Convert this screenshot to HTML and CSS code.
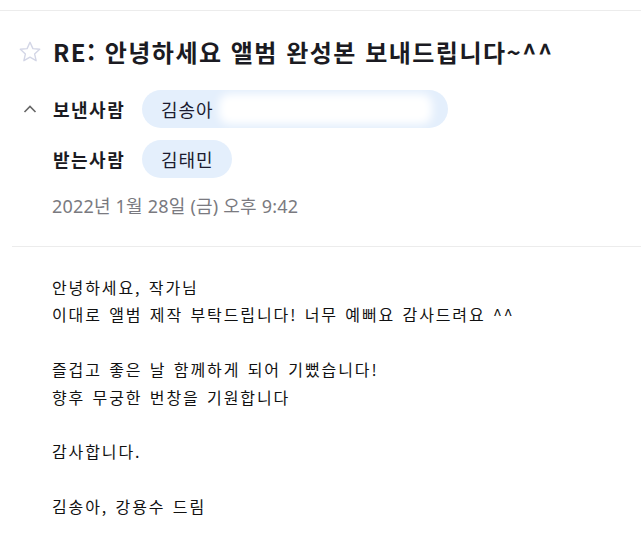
FILE: index.html
```html
<!DOCTYPE html>
<html lang="ko">
<head>
<meta charset="utf-8">
<title>메일</title>
<link rel="stylesheet" href="styles.css">
</head>
<body>
<div class="topbar"></div>
<header class="mail-head">
  <div class="title-row">
    <svg class="star" width="24" height="24" viewBox="0 0 24 24" aria-hidden="true">
      <path d="M12 2.3l2.9 6.3 6.8.7-5.1 4.6 1.5 6.8L12 17.2l-6.1 3.5 1.5-6.8-5.1-4.6 6.8-.7z" fill="none" stroke="#d3d6e6" stroke-width="1.4" stroke-linejoin="round"/>
    </svg>
    <h1 class="subject">RE: 안녕하세요 앨범 완성본 보내드립니다~^^</h1>
  </div>
  <div class="meta-row">
    <span class="toggle">
      <svg width="14" height="10" viewBox="0 0 14 10" aria-hidden="true"><path d="M1.5 8L7 2.5 12.5 8" fill="none" stroke="#666" stroke-width="1.6"/></svg>
    </span>
    <span class="label">보낸사람</span>
    <span class="chip chip-wide">김송아<span class="blurred"></span></span>
  </div>
  <div class="meta-row">
    <span class="toggle"></span>
    <span class="label">받는사람</span>
    <span class="chip">김태민</span>
  </div>
  <div class="date">2022년 1월 28일 (금) 오후 9:42</div>
</header>
<div class="divider"></div>
<main class="mail-body">
  <p>안녕하세요, 작가님<br>이대로 앨범 제작 부탁드립니다! 너무 예뻐요 감사드려요 ^^</p>
  <p>즐겁고 좋은 날 함께하게 되어 기뻤습니다!<br>향후 무궁한 번창을 기원합니다</p>
  <p>감사합니다.</p>
  <p>김송아, 강용수 드림</p>
</main>
</body>
</html>
```
FILE: styles.css
```css
html, body {
  margin: 0;
  padding: 0;
  background: #fff;
}
body {
  font-family: "Noto Sans CJK KR", "Noto Sans", sans-serif;
  color: #1b1b22;
  width: 641px;
  height: 558px;
  overflow: hidden;
}
.topbar {
  height: 10px;
  border-bottom: 1px solid #ececec;
}
.mail-head {
  padding: 0 0 0 18px;
}
.title-row {
  display: flex;
  align-items: center;
  height: 36px;
  margin-top: 23px;
}
.star {
  flex: none;
  margin-right: 11px;
}
.subject {
  margin: 0;
  font-size: 24px;
  font-weight: 700;
  line-height: 36px;
  color: #1b1b22;
  letter-spacing: 1.5px;
}
.meta-row {
  display: flex;
  align-items: center;
  height: 38px;
  margin-top: 12px;
}
.title-row + .meta-row {
  margin-top: 20px;
}
.toggle {
  width: 35px;
  flex: none;
  display: flex;
  align-items: center;
  padding-left: 5px;
  box-sizing: border-box;
}
.label {
  width: 89px;
  flex: none;
  font-size: 18px;
  font-weight: 700;
  letter-spacing: 1.5px;
  color: #1b1b22;
}
.chip {
  display: inline-flex;
  align-items: center;
  height: 38px;
  padding: 0 18px 0 19px;
  border-radius: 19px;
  background: #e4effc;
  font-size: 18px;
  letter-spacing: 1px;
  color: #1b1b30;
  box-sizing: border-box;
}
.chip-wide {
  width: 306px;
  padding-right: 16px;
}
.blurred {
  display: block;
  flex: 1;
  height: 30px;
  margin-left: 5px;
  background: #fff;
  border-radius: 10px;
  filter: blur(4px);
}
.date {
  margin: 16px 0 0 34px;
  font-size: 18px;
  color: #7a7a80;
  line-height: 24px;
  letter-spacing: 0.2px;
  font-family: "Noto Sans", "Noto Sans CJK KR", sans-serif;
}
.divider {
  margin: 28px 0 0 12px;
  border-top: 1px solid #ececec;
}
.mail-body {
  padding: 27px 0 0 52px;
  font-size: 16px;
  line-height: 27.4px;
  color: #111;
  letter-spacing: 1.9px;
  word-spacing: 1px;
}
.mail-body p {
  margin: 0 0 27.4px;
}
```
